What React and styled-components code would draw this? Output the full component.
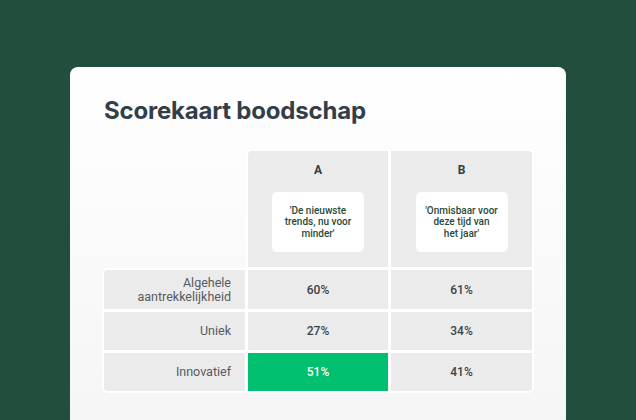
import React from 'react'
import styled, { createGlobalStyle } from 'styled-components'

const GlobalStyle = createGlobalStyle`
  html, body {
    margin: 0;
    padding: 0;
    background: #224f3d;
  }
  body {
    font-family: Roboto, "Liberation Sans", sans-serif;
  }
`

const Page = styled.div`
  width: 636px;
  height: 420px;
  overflow: hidden;
  background: #224f3d;
  padding: 67px 70px 0;
  box-sizing: border-box;
`

const Card = styled.div`
  height: 400px;
  border-radius: 8px;
  background: linear-gradient(180deg, #ffffff 0%, #fafafa 45%, #f4f4f4 100%);
  padding: 29px 33px 0 34px;
  box-sizing: border-box;
`

const Title = styled.h1`
  margin: 0 0 25px;
  font-family: Inter, "Liberation Sans", sans-serif;
  font-size: 24px;
  line-height: 30px;
  font-weight: 700;
  color: #333e48;
  letter-spacing: -0.2px;
`

const Grid = styled.div`
  display: grid;
  grid-template-columns: 141px 140px 141px;
  grid-template-rows: 116px 39px 38px 38px;
  gap: 3px;
  width: 431px;
`

const Cell = styled.div`
  background: ${p => (p.$win ? '#00bf6f' : '#ebebeb')};
  box-shadow: 0 0 0 2px #ffffff;
  display: flex;
  align-items: center;
  justify-content: ${p => (p.$label ? 'flex-end' : 'center')};
  text-align: ${p => (p.$label ? 'right' : 'center')};
  padding: ${p => (p.$label ? '0 14px 0 0' : '0')};
  font-size: ${p => (p.$label ? '12.5px' : '12px')};
  line-height: 14px;
  font-weight: ${p => (p.$label ? 400 : 500)};
  color: ${p => (p.$win ? '#ffffff' : p.$label ? '#555b61' : '#3b4249')};
  border-radius: ${p => p.$radius || '0'};
`

const Spacer = styled.div``

const HeadCell = styled.div`
  background: #ebebeb;
  box-shadow: 0 0 0 2px #ffffff;
  display: flex;
  flex-direction: column;
  align-items: center;
  padding-top: 13px;
  box-sizing: border-box;
  border-radius: ${p => p.$radius || '0'};
`

const Letter = styled.div`
  font-size: 12px;
  line-height: 13px;
  font-weight: 700;
  color: #333e48;
  margin-bottom: 15px;
`

const Quote = styled.div`
  width: 92px;
  height: 60px;
  background: #ffffff;
  border-radius: 5px;
  display: flex;
  align-items: center;
  justify-content: center;
  text-align: center;
  font-size: 10px;
  line-height: 11.5px;
  font-weight: 500;
  color: #1f4c3a;
  padding: 0 4px;
  box-sizing: border-box;
  white-space: nowrap;
`

const headers = [
  { key: 'A', lines: ["'De nieuwste", 'trends, nu voor', "minder'"], radius: '4px 0 0 0' },
  { key: 'B', lines: ["'Onmisbaar voor", 'deze tijd van', "het jaar'"], radius: '0 4px 0 0' },
]

const rows = [
  { label: ['Algehele', 'aantrekkelijkheid'], a: '60%', b: '61%' },
  { label: ['Uniek'], a: '27%', b: '34%' },
  { label: ['Innovatief'], a: '51%', b: '41%', win: true },
]

export default function App() {
  return (
    <Page>
      <GlobalStyle />
      <Card>
        <Title>Scorekaart boodschap</Title>
        <Grid>
          <Spacer />
          {headers.map(h => (
            <HeadCell key={h.key} $radius={h.radius}>
              <Letter>{h.key}</Letter>
              <Quote>
                <span>
                  {h.lines.map((l, i) => (
                    <React.Fragment key={i}>
                      {i > 0 && <br />}
                      {l}
                    </React.Fragment>
                  ))}
                </span>
              </Quote>
            </HeadCell>
          ))}
          {rows.map((r, i) => {
            const first = i === 0
            const last = i === rows.length - 1
            return (
              <React.Fragment key={r.a}>
                <Cell $label $radius={first ? '4px 0 0 0' : last ? '0 0 0 4px' : '0'}>
                  <span>
                    {r.label.map((l, j) => (
                      <React.Fragment key={j}>
                        {j > 0 && <br />}
                        {l}
                      </React.Fragment>
                    ))}
                  </span>
                </Cell>
                <Cell $win={r.win}>{r.a}</Cell>
                <Cell $radius={last ? '0 0 4px 0' : '0'}>{r.b}</Cell>
              </React.Fragment>
            )
          })}
        </Grid>
      </Card>
    </Page>
  )
}
